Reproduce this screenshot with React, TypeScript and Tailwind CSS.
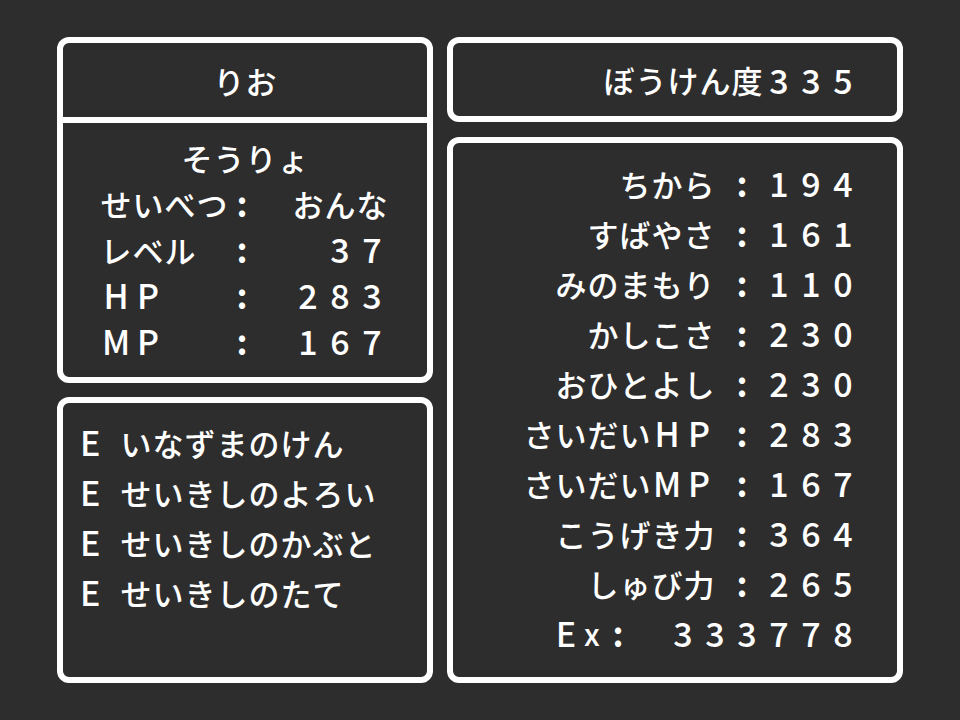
import React from 'react'

// ── Types ────────────────────────────────────────────────────────────────────

interface Stat {
  label: string
  value: string
}

// ── Data ─────────────────────────────────────────────────────────────────────

const PROFILE: Stat[] = [
  { label: 'せいべつ', value: 'おんな' },
  { label: 'レベル', value: '37' },
  { label: 'HP', value: '283' },
  { label: 'MP', value: '167' },
]

const EQUIPMENT = ['いなずまのけん', 'せいきしのよろい', 'せいきしのかぶと', 'せいきしのたて']

const STATS: Stat[] = [
  { label: 'ちから', value: '194' },
  { label: 'すばやさ', value: '161' },
  { label: 'みのまもり', value: '110' },
  { label: 'かしこさ', value: '230' },
  { label: 'おひとよし', value: '230' },
  { label: 'さいだいHP', value: '283' },
  { label: 'さいだいMP', value: '167' },
  { label: 'こうげき力', value: '364' },
  { label: 'しゅび力', value: '265' },
]

const WIDE = /[^\x00-\x7f]/

// ── Main Component ───────────────────────────────────────────────────────────

export default function App() {
  return (
    <div className="flex h-[720px] w-[960px] gap-[14px] bg-[#2d2d2d] px-[57px] py-[37px] font-['Noto_Sans_CJK_JP',sans-serif] font-medium leading-none text-white">
      {/* Left column */}
      <div className="flex w-[376px] flex-col gap-[14px]">
        <Window className="h-[346px]">
          <div className="flex h-[80px] items-center justify-center border-b-[6px] border-white">
            <Glyphs text="りお" />
          </div>
          <div className="pt-[11px]">
            <div className="flex h-[46px] items-center justify-center">
              <Glyphs text="そうりょ" />
            </div>
            {PROFILE.map(row => (
              <div key={row.label} className="flex h-[46px] items-center pl-[37px] pr-[39px]">
                <div className="w-[126px]">
                  <Glyphs text={row.label} />
                </div>
                <Colon />
                <div className="flex flex-1 justify-end">
                  <Glyphs text={row.value} />
                </div>
              </div>
            ))}
          </div>
        </Window>

        <Window className="flex-1 pl-[17px] pt-[14px]">
          {EQUIPMENT.map(item => (
            <div key={item} className="flex h-[50px] items-center">
              <span className="w-10 text-[34px]">E</span>
              <Glyphs text={item} />
            </div>
          ))}
        </Window>
      </div>

      {/* Right column */}
      <div className="flex w-[456px] flex-col gap-[15px]">
        <Window className="flex h-[85px] items-center justify-end pr-[38px]">
          <Glyphs text="ぼうけん度335" />
        </Window>

        <Window className="flex-1 pr-[38px] pt-[15px]">
          {STATS.map(s => (
            <div key={s.label} className="flex h-[50px] items-center justify-end">
              <Glyphs text={s.label} />
              <span className="w-[11px]" />
              <Colon />
              <span className="w-[5px]" />
              <Glyphs text={s.value} />
            </div>
          ))}
          <div className="flex h-[50px] items-center justify-end">
            <span className="flex w-[26px] justify-center text-[34px]">E</span>
            <span className="flex w-[26px] justify-center text-[30px]">x</span>
            <span className="flex w-[26px] justify-center text-[34px] font-bold">:</span>
            <span className="w-[36px]" />
            <Glyphs text="333778" />
          </div>
        </Window>
      </div>
    </div>
  )
}

// ── Window ───────────────────────────────────────────────────────────────────

function Window({ className = '', children }: { className?: string; children: React.ReactNode }) {
  return (
    <div className={`rounded-xl border-[6px] border-white bg-[#2d2d2d] ${className}`}>
      {children}
    </div>
  )
}

// ── Glyph cells (fixed 32px grid, like the bitmap font) ─────────────────────

function Glyphs({ text }: { text: string }) {
  return (
    <span className="inline-flex">
      {[...text].map((ch, i) => (
        <span
          key={i}
          className={`flex h-10 w-8 items-center justify-center ${WIDE.test(ch) ? 'text-[31px]' : 'text-[34px]'}`}
        >
          {ch}
        </span>
      ))}
    </span>
  )
}

function Colon() {
  return <span className="flex h-10 w-8 items-center justify-center text-[34px] font-bold">:</span>
}
